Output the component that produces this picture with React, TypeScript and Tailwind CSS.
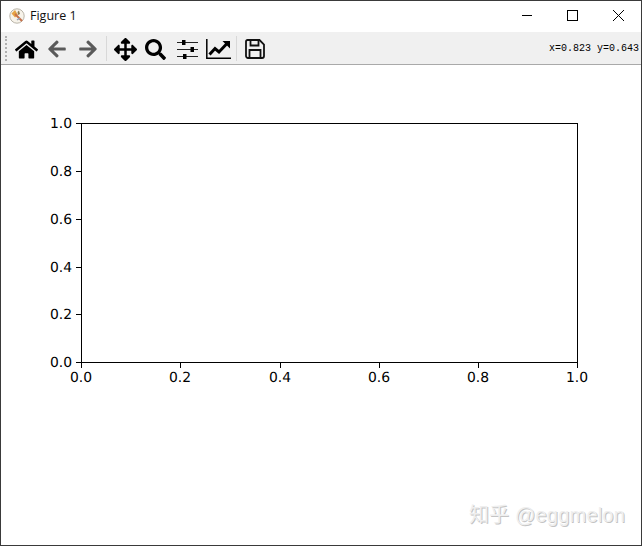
import { FaHome, FaArrowLeft, FaArrowRight, FaArrowsAlt, FaSearch } from "react-icons/fa";

const xTicks = [
  { x: 81, label: "0.0" },
  { x: 180, label: "0.2" },
  { x: 280, label: "0.4" },
  { x: 379, label: "0.6" },
  { x: 478, label: "0.8" },
  { x: 577, label: "1.0" },
];

// y values are relative to the canvas, which starts at 65px
const yTicks = [
  { y: 59, label: "1.0" },
  { y: 107, label: "0.8" },
  { y: 155, label: "0.6" },
  { y: 203, label: "0.4" },
  { y: 250, label: "0.2" },
  { y: 298, label: "0.0" },
];

function AppIcon() {
  return (
    <svg width="16" height="16" viewBox="0 0 16 16">
      <circle cx="8" cy="8" r="7.2" fill="#f7f3ea" stroke="#b9b4a8" strokeWidth="1" />
      <path d="M2.5 5.5 L6 2 L9 7 L6 9.5 Z" fill="#e6a445" />
      <path d="M6 6 L13 13" stroke="#c8714a" strokeWidth="2" />
      <path d="M8.5 4 L10 2.5 L11 6 L9 7 Z" fill="#8a7a55" />
      <path d="M8 12 L11 10" stroke="#8fa3b8" strokeWidth="1.5" />
    </svg>
  );
}

function SlidersIcon() {
  return (
    <svg width="21" height="20" viewBox="0 0 21 20" fill="none" stroke="#222">
      <path d="M0 3.5h21M0 10.5h21M0 17.5h21" strokeWidth="1.2" />
      <rect x="5" y="1" width="3.5" height="5" fill="#000" stroke="none" />
      <rect x="13.5" y="8" width="3.5" height="5" fill="#000" stroke="none" />
      <rect x="6" y="15" width="3.5" height="5" fill="#000" stroke="none" />
    </svg>
  );
}

function ChartIcon() {
  return (
    <svg width="25" height="20" viewBox="0 0 25 20" fill="none" stroke="#000">
      <path d="M0.8 0v19.2H25" strokeWidth="1.5" />
      <path d="M3.5 15.5L9 9.5l4 3.5L21 4.5" strokeWidth="3" />
      <path d="M16.5 2H24V9.5Z" fill="#000" stroke="none" />
    </svg>
  );
}

function SaveIcon() {
  return (
    <svg width="20" height="20" viewBox="0 0 20 20" fill="none" stroke="#111" strokeWidth="1.8">
      <path d="M2.5 1h12L19 5.5v11.5a2 2 0 0 1-2 2H3a2 2 0 0 1-2-2V2.5A1.5 1.5 0 0 1 2.5 1Z" />
      <path d="M5.5 1.5v5h8v-5" />
      <path d="M4.5 18.5v-7.5h11v7.5" />
    </svg>
  );
}

export default function App() {
  return (
    <div className="w-[642px] h-[546px] flex flex-col bg-white border border-[#3a3a3a] font-['Open_Sans',sans-serif] overflow-hidden">
      <div className="h-[31px] flex items-center pl-2 pb-[2px] shrink-0">
        <AppIcon />
        <span className="ml-[5px] mt-[1px] text-[12.5px] text-[#111]">Figure 1</span>
        <div className="ml-auto flex items-center text-black">
          <svg className="w-[46px] h-[30px]" viewBox="0 0 46 30" stroke="#000" fill="none">
            <path d="M19 14.5h10" />
          </svg>
          <svg className="w-[46px] h-[30px]" viewBox="0 0 46 30" stroke="#000" fill="none">
            <rect x="18.5" y="9.5" width="10" height="10" />
          </svg>
          <svg className="w-[46px] h-[30px]" viewBox="0 0 46 30" stroke="#000" fill="none">
            <path d="M18 9l11 11M29 9L18 20" />
          </svg>
        </div>
      </div>

      <div className="h-[33px] shrink-0 flex items-center bg-[#f0f0f0] border-b border-[#a9a9a9]">
        <div className="ml-1 h-[25px] w-[3px] border-l-2 border-dotted border-[#b0b0b0]" />
        <div className="w-[31px] ml-[3px] pt-[2px] flex justify-center">
          <FaHome size={23} color="#000" />
        </div>
        <div className="w-[30px] pt-[2px] flex justify-center">
          <FaArrowLeft size={20} color="#5a5a5a" />
        </div>
        <div className="w-[31px] pt-[2px] flex justify-center">
          <FaArrowRight size={20} color="#5a5a5a" />
        </div>
        <div className="mx-[3px] w-px h-[25px] bg-[#d8d8d8]" />
        <div className="w-[30px] pt-[2px] flex justify-center">
          <FaArrowsAlt size={23} color="#000" />
        </div>
        <div className="w-[31px] pt-[2px] flex justify-center">
          <FaSearch size={21} color="#000" />
        </div>
        <div className="w-[31px] ml-[1px] pt-[2px] flex justify-center">
          <SlidersIcon />
        </div>
        <div className="w-[31px] pt-[2px] flex justify-center">
          <ChartIcon />
        </div>
        <div className="mx-[2px] w-px h-[25px] bg-[#d8d8d8]" />
        <div className="w-[31px] pt-[2px] flex justify-center">
          <SaveIcon />
        </div>
        <span className="ml-auto mr-[2px] mt-[1px] text-[10px] text-black font-['Liberation_Mono',monospace] whitespace-nowrap">
          x=0.823 y=0.643
        </span>
      </div>

      <div className="relative flex-1">
        <svg
          width="640"
          height="480"
          textRendering="geometricPrecision"
          className="block font-['DejaVu_Sans',sans-serif]"
        >
          <rect x="80.5" y="58.5" width="496" height="239" fill="none" stroke="#000" strokeWidth="1" />
          {xTicks.map((t) => (
            <g key={t.x}>
              <line x1={t.x - 0.5} x2={t.x - 0.5} y1="298" y2="303" stroke="#000" />
              <text x={t.x - 1} y="317" textAnchor="middle" fontSize="13.9" fill="#000">
                {t.label}
              </text>
            </g>
          ))}
          {yTicks.map((t) => (
            <g key={t.y}>
              <line x1="75" x2="80" y1={t.y - 0.5} y2={t.y - 0.5} stroke="#000" />
              <text x="71" y={t.y + 4} textAnchor="end" fontSize="13.9" fill="#000">
                {t.label}
              </text>
            </g>
          ))}
        </svg>
        <span className="absolute right-[16px] bottom-[20px] text-[20px] leading-none tracking-[0.2px] text-[#efefef] [text-shadow:1px_1px_0_#c4c4c4] font-['Liberation_Sans','Noto_Sans_CJK_SC',sans-serif] whitespace-nowrap">
          知乎 @eggmelon
        </span>
      </div>
    </div>
  );
}
